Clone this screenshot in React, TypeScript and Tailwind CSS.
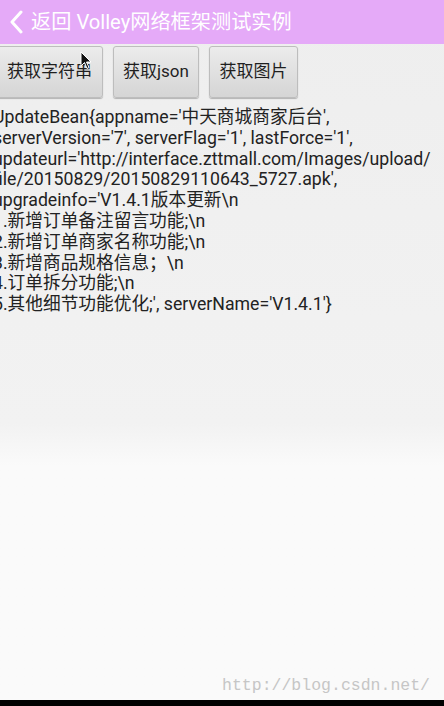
const lines = [
  "UpdateBean{appname='中天商城商家后台',",
  "serverVersion='7', serverFlag='1', lastForce='1',",
  "updateurl='http://interface.zttmall.com/Images/upload/",
  "file/20150829/20150829110643_5727.apk',",
  "upgradeinfo='V1.4.1版本更新\\n",
  "1.新增订单备注留言功能;\\n",
  "2.新增订单商家名称功能;\\n",
  "3.新增商品规格信息；\\n",
  "4.订单拆分功能;\\n",
  "5.其他细节功能优化;', serverName='V1.4.1'}",
];

const buttons = [
  { label: '获取字符串', cls: 'w-[107px] -ml-[4px]' },
  { label: '获取json', cls: 'w-[86px]' },
  { label: '获取图片', cls: 'w-[89px]' },
];

export default function App() {
  return (
    <div
      className="w-[444px] h-[706px] flex flex-col overflow-hidden bg-gradient-to-b from-[#eeeeee] via-[#f2f2f2] via-60% to-[#fafafa] to-[66%] text-[#222222]"
      style={{ fontFamily: 'Roboto, "Noto Sans CJK SC", sans-serif' }}
    >
      <div className="h-[44px] bg-[#e5aaf8] flex items-center pl-[8px] text-white">
        <svg width="16" height="24" viewBox="0 0 16 24" className="mr-[7px]">
          <path d="M13 2 L4 12 L13 22" fill="none" stroke="#ffffff" strokeWidth="3" strokeLinecap="round" strokeLinejoin="round" />
        </svg>
        <span className="text-[20.2px] leading-none">返回 Volley网络框架测试实例</span>
      </div>

      <div className="relative flex gap-[10px] pt-[2px] h-[56px]">
        {buttons.map(b => (
          <div
            key={b.label}
            className={`${b.cls} h-[52px] flex items-center justify-center rounded-[3px] border border-[#bdbdbd] bg-gradient-to-b from-[#ececec] to-[#d5d5d5] shadow-[0_1px_1px_rgba(0,0,0,0.25)] text-[17px] text-[#1f1f1f]`}
          >
            {b.label}
          </div>
        ))}
        <svg width="14" height="20" viewBox="0 0 14 20" className="absolute left-[80px] top-[7px]">
          <path d="M1 1 L1 15 L4.5 11.5 L7 17.5 L9 16.5 L6.5 11 L11 11 Z" fill="#111111" stroke="#ffffff" strokeWidth="1" />
        </svg>
      </div>

      <div className="-ml-[7px] mt-[7px] text-[17.7px] leading-[20.8px] whitespace-nowrap">
        {lines.map(l => (
          <div key={l}>{l}</div>
        ))}
      </div>

      <div className="flex-1" />

      <div
        className="self-end mr-[14px] mb-[6px] text-[16.5px] leading-none text-[#c6c6c6]"
        style={{ fontFamily: '"Liberation Mono", monospace' }}
      >
        http://blog.csdn.net/
      </div>
      <div className="h-[6px] bg-black" />
    </div>
  );
}
